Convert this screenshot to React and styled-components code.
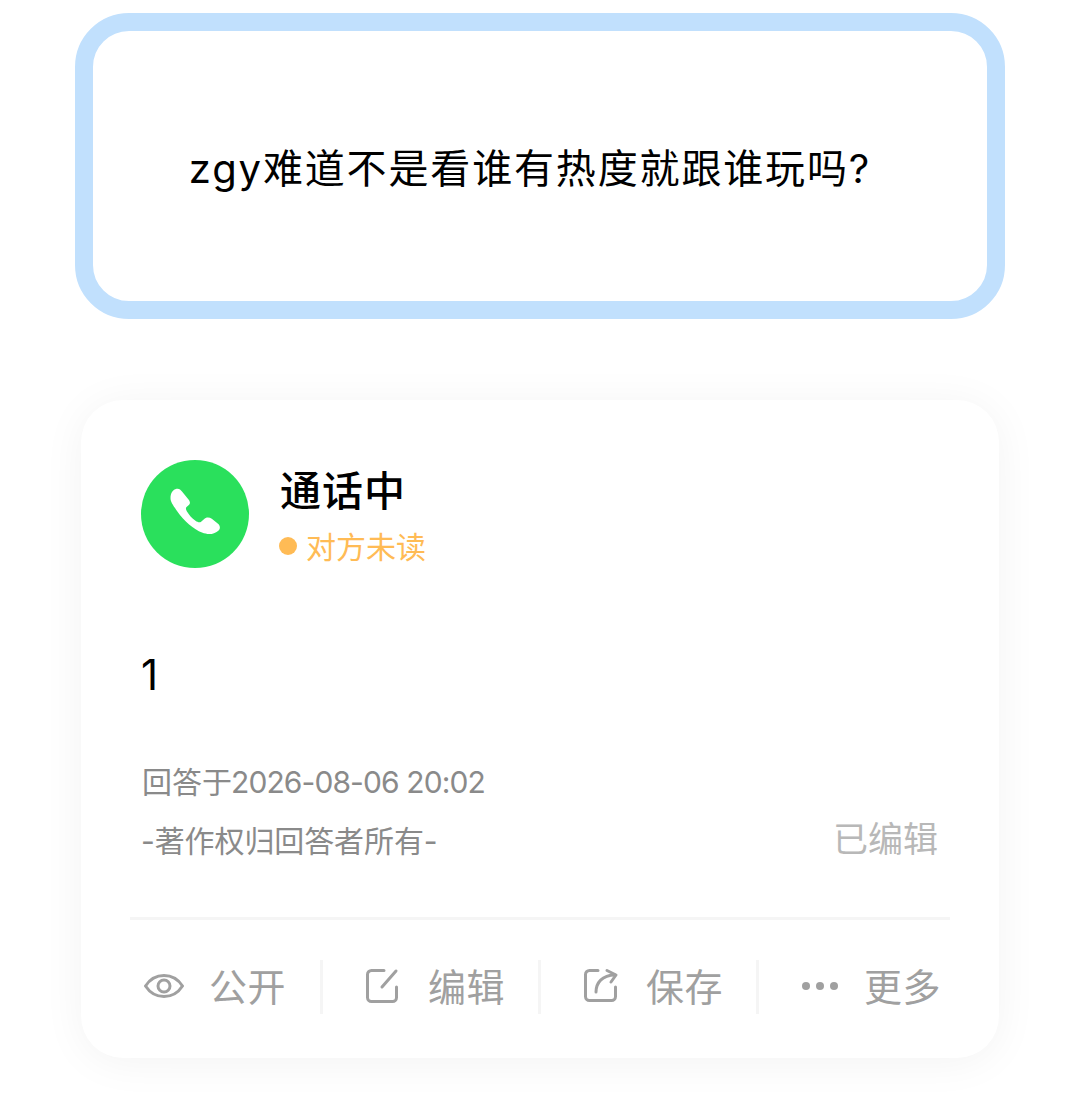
import React from "react";
import styled, { createGlobalStyle } from "styled-components";

const GlobalStyle = createGlobalStyle`
  html, body {
    margin: 0;
    background: #fff;
    font-family: Inter, "Noto Sans CJK SC", sans-serif;
  }
`;

const Page = styled.div`
  width: 1080px;
  height: 1093px;
  box-sizing: border-box;
  padding: 13px 75px 0;
  overflow: hidden;
`;

const Question = styled.div`
  height: 306px;
  box-sizing: border-box;
  border: 18px solid #c1e0fd;
  border-radius: 54px;
  padding-right: 20px;
  display: flex;
  align-items: center;
  justify-content: center;
  font-size: 40px;
  letter-spacing: 1.85px;
  color: #000;
`;

const Card = styled.div`
  margin: 81px 6px 0;
  height: 658px;
  box-sizing: border-box;
  padding: 60px 49px 0;
  border-radius: 42px;
  background: #fff;
  box-shadow: 0 4px 44px rgba(0, 0, 0, 0.05);
`;

const Header = styled.div`
  display: flex;
  gap: 31px;
  padding-left: 11px;
`;

const Avatar = styled.div`
  width: 108px;
  height: 108px;
  border-radius: 50%;
  background: #2ae05c;
  display: flex;
  align-items: center;
  justify-content: center;
`;

const HeaderText = styled.div`
  display: flex;
  flex-direction: column;
`;

const Name = styled.div`
  margin-top: 1px;
  font-size: 41px;
  font-weight: 500;
  letter-spacing: 1px;
  line-height: 60px;
  color: #000;
`;

const Status = styled.div`
  display: flex;
  align-items: center;
  gap: 9px;
  margin-left: -1px;
  margin-top: 4px;
  font-size: 30px;
  line-height: 44px;
  color: #ffbb55;
`;

const Dot = styled.span`
  width: 18px;
  height: 18px;
  margin-top: -2px;
  border-radius: 50%;
  background: #ffbb55;
`;

const Body = styled.div`
  margin-top: 76px;
  padding-left: 11px;
  font-size: 42px;
  line-height: 60px;
  color: #000;
`;

const Time = styled.div`
  margin-top: 55px;
  padding-left: 12px;
  font-size: 30px;
  line-height: 44px;
  color: #8a8a8a;
`;

const TimeValue = styled.span`
  margin-left: -1px;
  letter-spacing: -0.9px;
`;

const CopyRow = styled.div`
  display: flex;
  align-items: center;
  justify-content: space-between;
  margin-top: 13px;
  padding: 0 12px 0 11px;
  height: 46px;
`;

const Copyright = styled.div`
  margin-top: -2px;
  font-size: 30px;
  letter-spacing: -0.1px;
  color: #8a8a8a;
`;

const Edited = styled.div`
  margin-top: -8px;
  font-size: 35px;
  color: #b8b8b8;
`;

const Rule = styled.div`
  margin-top: 54px;
  height: 3px;
  background: #f5f5f5;
`;

const Actions = styled.div`
  display: grid;
  grid-template-columns: 190px 218px 218px 194px;
  margin-top: 40px;
`;

const Action = styled.div`
  height: 54px;
  box-sizing: border-box;
  display: flex;
  align-items: center;
  gap: ${(p) => (p.$first ? "25px" : "23px")};
  padding-left: ${(p) => (p.$first ? "14px" : "42px")};
  font-size: 38px;
  letter-spacing: 0.6px;
  color: #a0a0a0;
  border-left: ${(p) => (p.$first ? "none" : "3px solid #f5f5f5")};
`;

const ActionLabel = styled.span`
  margin-bottom: 6px;
`;

const IconBox = styled.svg`
  width: 40px;
  height: 40px;
  flex: none;
  fill: none;
  stroke: #a0a0a0;
  stroke-width: 3;
  stroke-linecap: round;
  stroke-linejoin: round;
`;

const DotsIconBox = styled(IconBox)`
  stroke: none;
  fill: #a0a0a0;
`;

const EyeIcon = () => (
  <IconBox viewBox="0 0 40 40">
    <path d="M1.5 19C6 12 12 8.5 20 8.5S34 12 38.5 19C34 26 28 29.5 20 29.5S6 26 1.5 19Z" />
    <circle cx="20" cy="19" r="6" />
  </IconBox>
);

const EditIcon = () => (
  <IconBox viewBox="0 0 40 40">
    <path d="M19 3.5H6.5a4 4 0 0 0-4 4v23a4 4 0 0 0 4 4h21a4 4 0 0 0 4-4V20" />
    <path d="M17 20 31 4" />
  </IconBox>
);

const ShareIcon = () => (
  <IconBox viewBox="0 0 40 40">
    <path d="M15 3.5H6.5a4 4 0 0 0-4 4v22a4 4 0 0 0 4 4h22a4 4 0 0 0 4-4V20" />
    <path d="M13 25C13 16 19 8 32 8" />
    <path d="M24 3.5 33 8 28 15" />
  </IconBox>
);

const MoreIcon = () => (
  <DotsIconBox viewBox="0 0 40 40">
    <circle cx="5" cy="19" r="4" />
    <circle cx="19" cy="19" r="4" />
    <circle cx="33" cy="19" r="4" />
  </DotsIconBox>
);

const actions = [
  { label: "公开", icon: <EyeIcon /> },
  { label: "编辑", icon: <EditIcon /> },
  { label: "保存", icon: <ShareIcon /> },
  { label: "更多", icon: <MoreIcon /> },
];

export default function App() {
  return (
    <Page>
      <GlobalStyle />
      <Question>zgy难道不是看谁有热度就跟谁玩吗?</Question>
      <Card>
        <Header>
          <Avatar>
            <svg width="70" height="68" viewBox="0 0 70 68">
              <path
                fill="#fff"
                d="M10.5 18C10.5 13 13 9.5 16.5 8.8 19 8.3 20.5 9.5 22 11.5L28.5 19.5C30.5 22 30.5 24 28 25.8L26.5 27C25.6 27.8 25.8 29.5 26.8 31.2 28.8 34.6 32 38.3 35.5 40.8 37.5 42.2 39.5 42.7 40.8 41.9L44.5 38.8C46.5 37 49.5 37.2 51.8 38.8L58 43.8C60.5 46 60.5 49.3 58 51 54 54.5 48 55 42 52.6 34 49.5 24 41 17 31 13 25 10.5 22 10.5 18Z"
              />
            </svg>
          </Avatar>
          <HeaderText>
            <Name>通话中</Name>
            <Status>
              <Dot />
              对方未读
            </Status>
          </HeaderText>
        </Header>
        <Body>1</Body>
        <Time>
          回答于<TimeValue>2026-08-06 20:02</TimeValue>
        </Time>
        <CopyRow>
          <Copyright>-著作权归回答者所有-</Copyright>
          <Edited>已编辑</Edited>
        </CopyRow>
        <Rule />
        <Actions>
          {actions.map((a, i) => (
            <Action key={a.label} $first={i === 0}>
              {a.icon}
              <ActionLabel>{a.label}</ActionLabel>
            </Action>
          ))}
        </Actions>
      </Card>
    </Page>
  );
}
